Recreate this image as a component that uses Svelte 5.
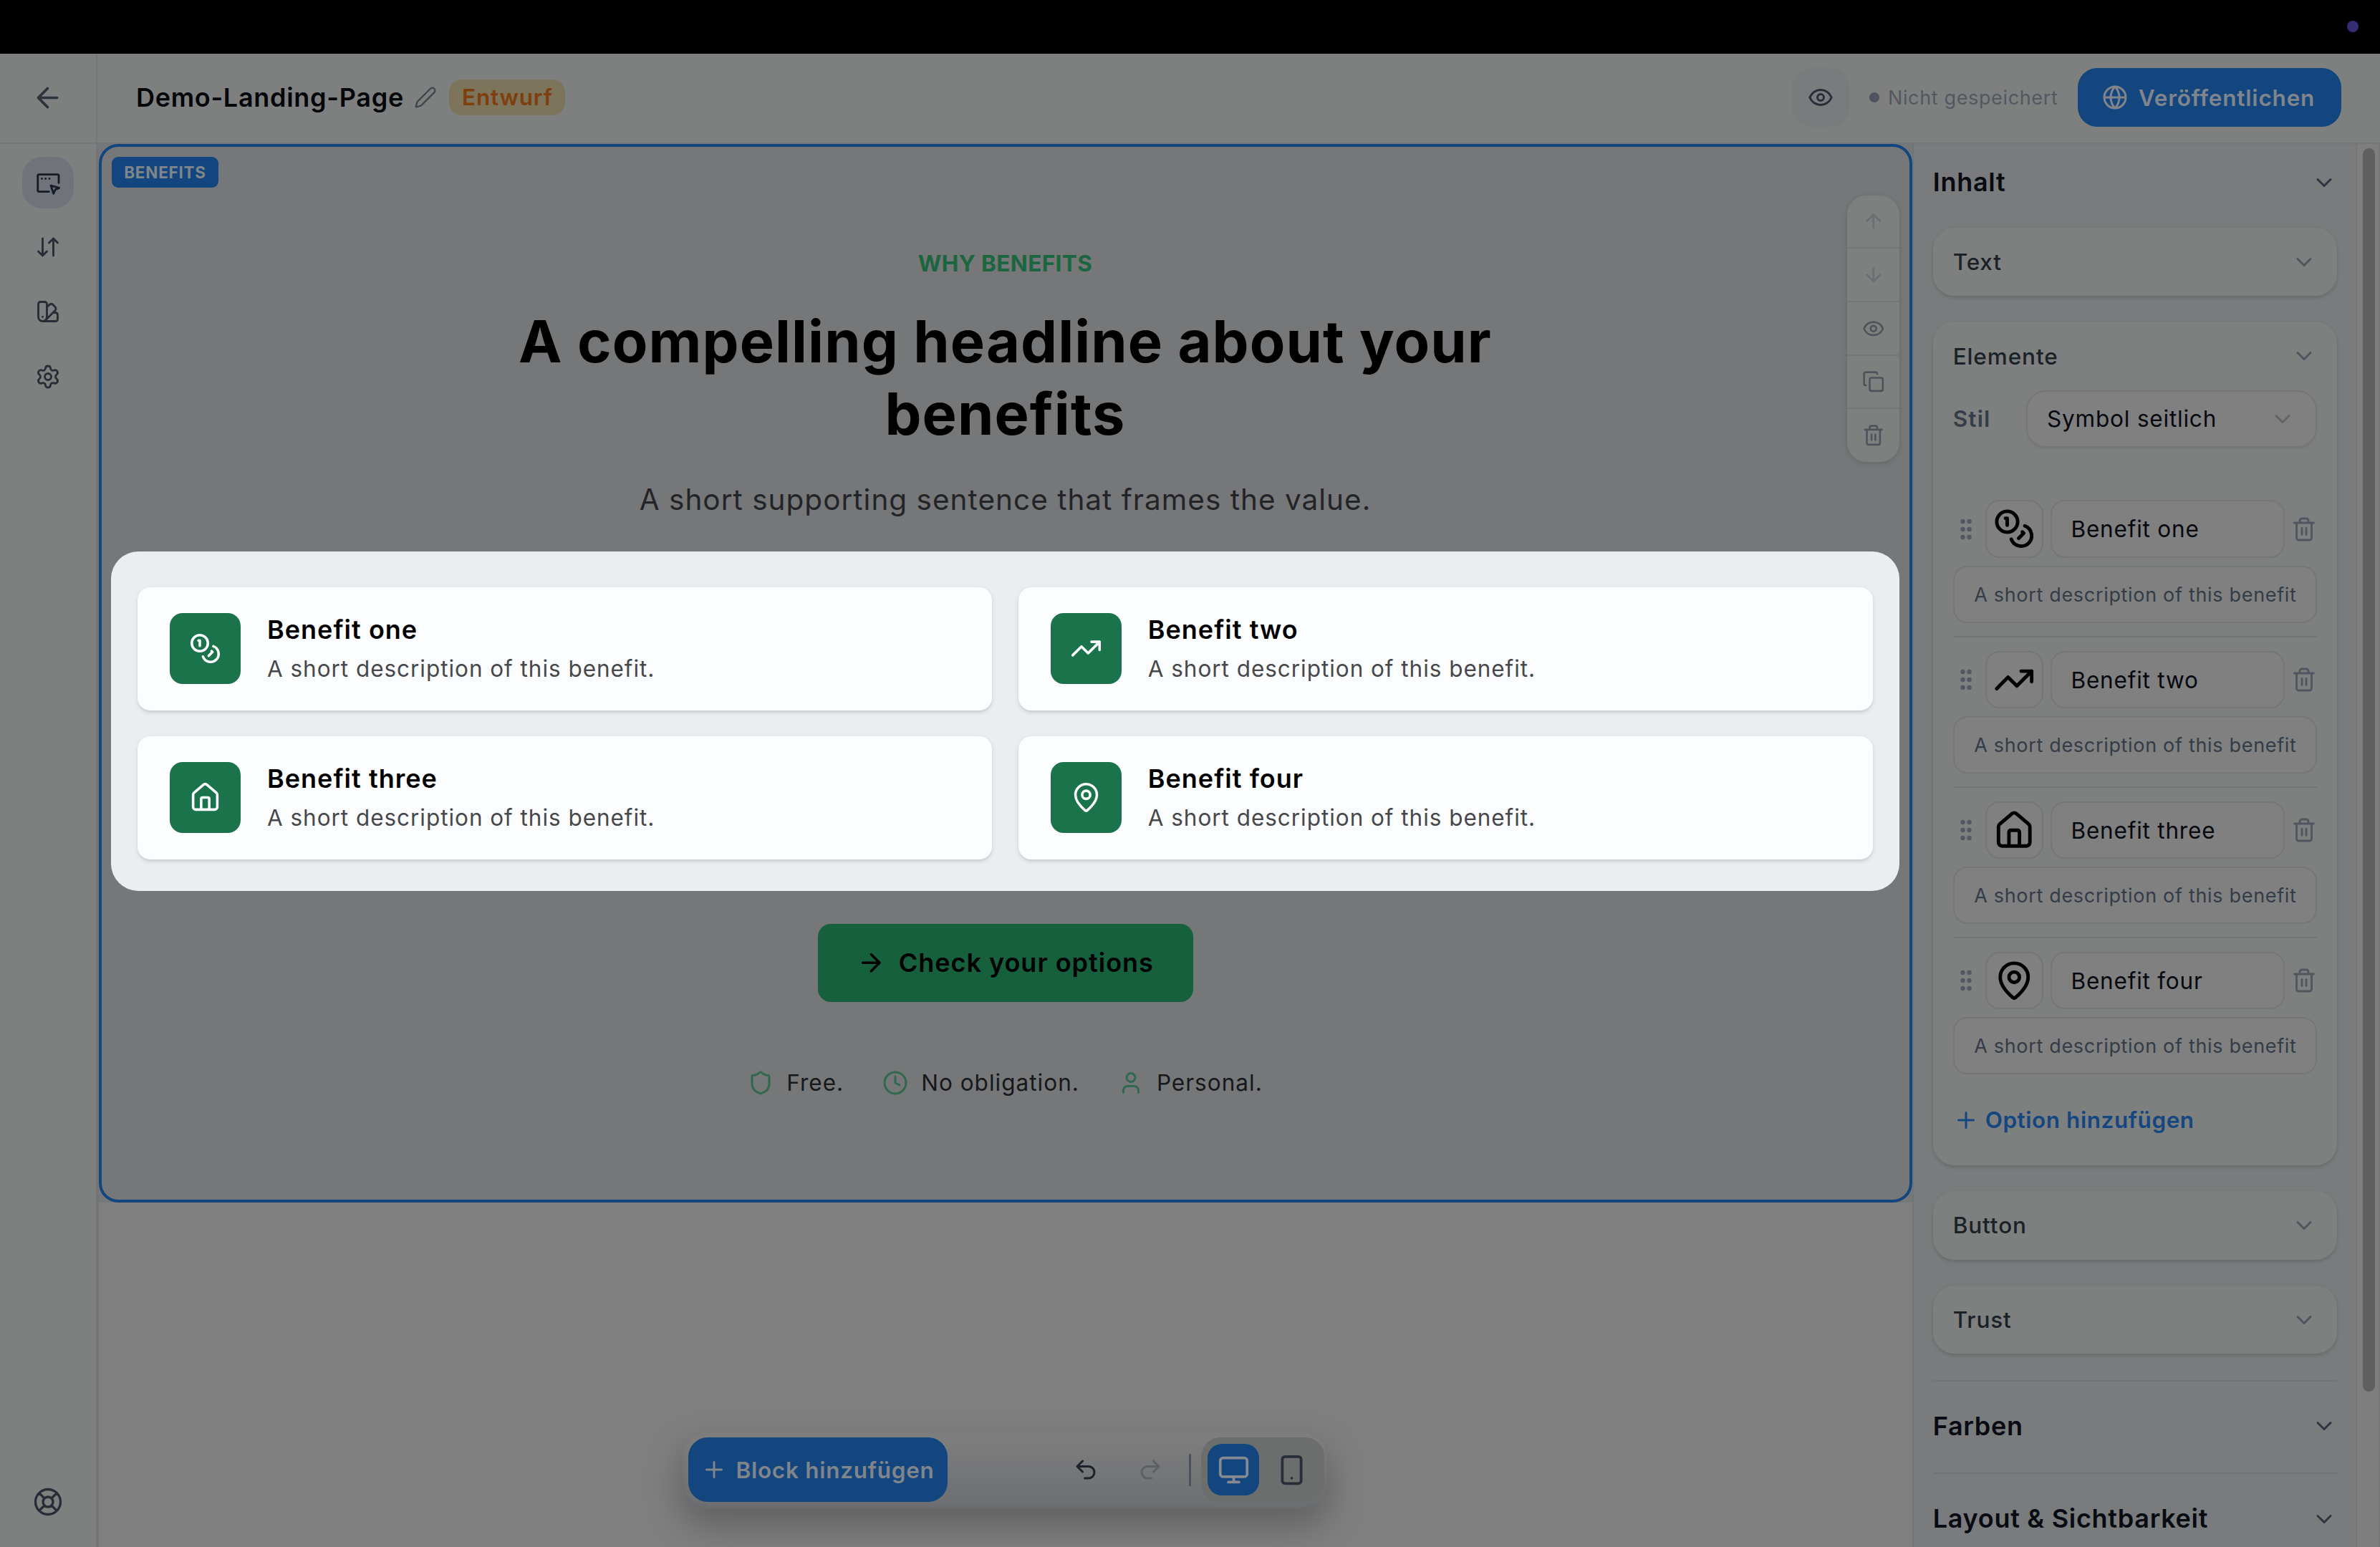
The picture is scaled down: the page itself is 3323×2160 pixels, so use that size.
<script>
  const benefits = [
    { name: 'Benefit one', icon: 'coins' },
    { name: 'Benefit two', icon: 'trend' },
    { name: 'Benefit three', icon: 'house' },
    { name: 'Benefit four', icon: 'pin' }
  ];
  const description = 'A short description of this benefit.';
  const trust = [
    { label: 'Free.', icon: 'shield' },
    { label: 'No obligation.', icon: 'clock' },
    { label: 'Personal.', icon: 'user' }
  ];
  const nav = ['builder', 'sort', 'swatch', 'settings'];
  const blockActions = ['up', 'down', 'eye', 'copy', 'trash'];

  // Stroke paths on a 24-unit grid.
  const icons = {
    back: 'M12 19l-7-7 7-7M19 12H5',
    forward: 'M5 12h14M12 5l7 7-7 7',
    up: 'M5 12l7-7 7 7M12 19V5',
    down: 'M12 5v14M19 12l-7 7-7-7',
    pencil: 'M21.174 6.812a1 1 0 0 0-3.986-3.987L3.842 16.174a2 2 0 0 0-.5.83l-1.321 4.352a.5.5 0 0 0 .623.622l4.353-1.32a2 2 0 0 0 .83-.497z',
    builder: 'M22 12.2V5.6a1.2 1.2 0 0 0-1.2-1.2H3.7a1.2 1.2 0 0 0-1.2 1.2v13.6a1.2 1.2 0 0 0 1.2 1.2h9.2M6.3 8.3h.01M9.8 8.3h.01M13.3 8.3h.01M14.7 14.7l7.7 2.2-3.5 1.5-1.8 3.8z',
    sort: 'M3 16l4 4 4-4M7 20V4M21 8l-4-4-4 4M17 4v16',
    swatch: 'M11 17a4 4 0 0 1-8 0V5a2 2 0 0 1 2-2h4a2 2 0 0 1 2 2ZM16.7 13H19a2 2 0 0 1 2 2v4a2 2 0 0 1-2 2H7M7 17h.01M11 8l2.3-2.3a2.4 2.4 0 0 1 3.404.004L18.6 7.6a2.4 2.4 0 0 1 .026 3.434L9.9 19.8',
    settings: 'M9.671 4.136a2.34 2.34 0 0 1 4.659 0 2.34 2.34 0 0 0 3.319 1.915 2.34 2.34 0 0 1 2.33 4.033 2.34 2.34 0 0 0 0 3.831 2.34 2.34 0 0 1-2.33 4.033 2.34 2.34 0 0 0-3.319 1.915 2.34 2.34 0 0 1-4.659 0 2.34 2.34 0 0 0-3.32-1.915 2.34 2.34 0 0 1-2.33-4.033 2.34 2.34 0 0 0 0-3.831A2.34 2.34 0 0 1 6.35 6.051a2.34 2.34 0 0 0 3.319-1.915M9 12a3 3 0 1 0 6 0 3 3 0 1 0-6 0',
    help: 'M2 12a10 10 0 1 0 20 0 10 10 0 1 0-20 0M4.93 4.93l4.24 4.24M14.83 9.17l4.24-4.24M14.83 14.83l4.24 4.24M9.17 14.83l-4.24 4.24M8 12a4 4 0 1 0 8 0 4 4 0 1 0-8 0',
    eye: 'M2.062 12.348a1 1 0 0 1 0-.696 10.75 10.75 0 0 1 19.876 0 1 1 0 0 1 0 .696 10.75 10.75 0 0 1-19.876 0M9 12a3 3 0 1 0 6 0 3 3 0 1 0-6 0',
    globe: 'M2 12a10 10 0 1 0 20 0 10 10 0 1 0-20 0M12 2a14.5 14.5 0 0 0 0 20 14.5 14.5 0 0 0 0-20M2 12h20',
    copy: 'M10 8h10a2 2 0 0 1 2 2v10a2 2 0 0 1-2 2H10a2 2 0 0 1-2-2V10a2 2 0 0 1 2-2ZM4 16c-1.1 0-2-.9-2-2V4c0-1.1.9-2 2-2h10c1.1 0 2 .9 2 2',
    trash: 'M3 6h18M19 6v14a2 2 0 0 1-2 2H7a2 2 0 0 1-2-2V6M8 6V4a2 2 0 0 1 2-2h4a2 2 0 0 1 2 2v2M10 11v6M14 11v6',
    chevron: 'M6 9l6 6 6-6',
    plus: 'M5 12h14M12 5v14',
    coins: 'M2 8a6 6 0 1 0 12 0 6 6 0 1 0-12 0M18.09 10.37A6 6 0 1 1 10.34 18M7 6h1v4M16.71 13.88l.7.71-2.82 2.82',
    trend: 'M22 7l-8.5 8.5-5-5L2 17M16 7h6v6',
    house: 'M15 21v-8a1 1 0 0 0-1-1h-4a1 1 0 0 0-1 1v8M3 10a2 2 0 0 1 .709-1.528l7-6a2 2 0 0 1 2.582 0l7 6A2 2 0 0 1 21 10v9a2 2 0 0 1-2 2H5a2 2 0 0 1-2-2z',
    pin: 'M20 10c0 4.993-5.539 10.193-7.399 11.799a1 1 0 0 1-1.202 0C9.539 20.193 4 14.993 4 10a8 8 0 0 1 16 0M9 10a3 3 0 1 0 6 0 3 3 0 1 0-6 0',
    shield: 'M20 13c0 5-3.5 7.5-7.66 8.95a1 1 0 0 1-.67-.01C7.5 20.5 4 18 4 13V6a1 1 0 0 1 1-1c2 0 4.5-1.2 6.24-2.72a1.17 1.17 0 0 1 1.52 0C14.51 3.81 17 5 19 5a1 1 0 0 1 1 1z',
    clock: 'M2 12a10 10 0 1 0 20 0 10 10 0 1 0-20 0M12 6v6l4 2',
    user: 'M19 21v-2a4 4 0 0 0-4-4H9a4 4 0 0 0-4 4v2M8 7a4 4 0 1 0 8 0 4 4 0 1 0-8 0',
    undo: 'M9 14L4 9l5-5M4 9h10.5a5.5 5.5 0 0 1 5.5 5.5 5.5 5.5 0 0 1-5.5 5.5H11',
    redo: 'M15 14l5-5-5-5M20 9H9.5A5.5 5.5 0 0 0 4 14.5 5.5 5.5 0 0 0 9.5 20H13',
    monitor: 'M4 3h16a2 2 0 0 1 2 2v10a2 2 0 0 1-2 2H4a2 2 0 0 1-2-2V5a2 2 0 0 1 2-2ZM8 21h8M12 17v4',
    phone: 'M7 2h10a2 2 0 0 1 2 2v16a2 2 0 0 1-2 2H7a2 2 0 0 1-2-2V4a2 2 0 0 1 2-2ZM12 18h.01'
  };
</script>

{#snippet icon(name, cls = '')}
  <svg class="icon {cls}" viewBox="0 0 24 24" aria-hidden="true"><path d={icons[name]} /></svg>
{/snippet}

<div class="page">
  <div class="strip"><span class="strip-dot"></span></div>

  <header class="header">
    <div class="back">{@render icon('back', 'i45')}</div>
    <div class="title">
      <h1>Demo-Landing-Page</h1>
      {@render icon('pencil', 'i32')}
      <span class="status">Entwurf</span>
    </div>
    <div class="header-actions">
      <button class="preview">{@render icon('eye')}</button>
      <span class="unsaved"><i></i>Nicht gespeichert</span>
      <button class="publish">{@render icon('globe')}Veröffentlichen</button>
    </div>
  </header>

  <div class="body">
    <nav class="sidebar">
      {#each nav as name, i}
        <button class="nav-item" class:active={i === 0}>{@render icon(name)}</button>
      {/each}
      <button class="nav-item help">{@render icon('help', 'i42')}</button>
    </nav>

    <main class="canvas">
      <section class="block">
        <span class="tag">BENEFITS</span>
        <p class="eyebrow">WHY BENEFITS</p>
        <h2 class="headline">A compelling headline about your<br />benefits</h2>
        <p class="lead">A short supporting sentence that frames the value.</p>

        <div class="spotlight">
          {#each benefits as b}
            <article class="card">
              <span class="tile">{@render icon(b.icon, 'i45')}</span>
              <div class="card-text">
                <h3>{b.name}</h3>
                <p>{description}</p>
              </div>
            </article>
          {/each}
        </div>

        <button class="cta">{@render icon('forward', 'i40')}Check your options</button>
        <ul class="trust">
          {#each trust as t}
            <li>{@render icon(t.icon)}{t.label}</li>
          {/each}
        </ul>

        <div class="actions">
          {#each blockActions as a, i}
            <button class:disabled={i < 2}>{@render icon(a, 'i31')}</button>
          {/each}
        </div>
      </section>

      <div class="dock">
        <button class="add-block">{@render icon('plus')}Block hinzufügen</button>
        <div class="dock-tools">
          <button class="tool">{@render icon('undo')}</button>
          <button class="tool off">{@render icon('redo')}</button>
          <span class="rule"></span>
          <div class="devices">
            <button class="on">{@render icon('monitor', 'i45')}</button>
            <button>{@render icon('phone', 'i45')}</button>
          </div>
        </div>
      </div>
    </main>

    <aside class="panel">
      <div class="group-head first"><h4>Inhalt</h4>{@render icon('chevron')}</div>
      <div class="box"><div class="box-head">Text{@render icon('chevron')}</div></div>
      <div class="box elements">
        <div class="box-head">Elemente{@render icon('chevron')}</div>
        <div class="style-row">
          <span>Stil</span>
          <div class="select">Symbol seitlich{@render icon('chevron')}</div>
        </div>
        <div class="items">
          {#each benefits as b}
            <div class="item">
              <div class="item-row">
                <svg class="grip" viewBox="0 0 18 30" aria-hidden="true">
                  {#each [4, 15, 26] as y}
                    <circle cx="4.5" cy={y} r="3.2" /><circle cx="13.5" cy={y} r="3.2" />
                  {/each}
                </svg>
                <div class="icon-pick">{@render icon(b.icon, 'i58')}</div>
                <div class="field">{b.name}</div>
                {@render icon('trash')}
              </div>
              <div class="field desc"><span>A short description of this benefit</span></div>
            </div>
          {/each}
        </div>
        <button class="add-option">{@render icon('plus')}Option hinzufügen</button>
      </div>
      <div class="box"><div class="box-head">Button{@render icon('chevron')}</div></div>
      <div class="box"><div class="box-head">Trust{@render icon('chevron')}</div></div>
      <div class="group-head"><h4>Farben</h4>{@render icon('chevron')}</div>
      <div class="group-head"><h4>Layout &amp; Sichtbarkeit</h4>{@render icon('chevron')}</div>
    </aside>

    <div class="scrollbar"><span></span></div>
  </div>
</div>

<style>
  :global(body) { background: #000; overflow: hidden; }
  .page, .page * { box-sizing: border-box; margin: 0; padding: 0; }
  .page {
    width: 3323px; height: 2160px; display: flex; flex-direction: column; overflow: hidden;
    font: 400 31.5px/45px Inter, "Liberation Sans", sans-serif; letter-spacing: 0.8px; color: #080c12;
  }
  button { font: inherit; letter-spacing: inherit; color: inherit; background: none; border: 0; display: flex; align-items: center; justify-content: center; }
  ul { list-style: none; }

  .icon { width: 36px; height: 36px; flex: none; fill: none; stroke: currentColor; stroke-width: 2; stroke-linecap: round; stroke-linejoin: round; }
  .i31 { width: 31.5px; height: 31.5px; }
  .i32 { width: 32px; height: 32px; }
  .i40 { width: 40.5px; height: 40.5px; }
  .i42 { width: 42px; height: 42px; }
  .i45 { width: 45px; height: 45px; stroke-width: 1.9; }
  .i58 { width: 58.5px; height: 58.5px; }

  .strip { height: 75px; flex: none; background: #000; display: flex; justify-content: flex-end; padding: 28.5px 30px 0 0; }
  .strip-dot { width: 16px; height: 16px; border-radius: 50%; background: #352d74; }

  .header { height: 126px; flex: none; display: flex; align-items: stretch; background: #7e807f; border-bottom: 2.25px solid #75777a; }
  .back { width: 135.5px; border-right: 2.25px solid #75777a; padding-bottom: 1.5px; display: flex; align-items: center; justify-content: center; color: #2c333d; }
  .title { display: flex; align-items: center; padding: 0 0 2px 54.5px; }
  .title h1 { font-size: 36px; font-weight: 600; line-height: 54px; letter-spacing: 0.7px; color: #040609; }
  .title .icon { margin-left: 14px; color: #41464d; stroke-width: 1.8; }
  .status { margin-left: 17.5px; width: 162px; height: 50px; border-radius: 18px; background: #7d745c; color: #7e3f0c; font-weight: 600; line-height: 49px; text-align: center; }
  .header-actions { margin-left: auto; display: flex; align-items: center; padding: 0 54px 1.5px 0; }
  .preview { width: 82px; height: 82px; border-radius: 27px; background: #7a7b7d; color: #272e38; }
  .unsaved { display: flex; align-items: center; width: 290.6px; margin-left: 27px; font-size: 27px; letter-spacing: 0.64px; color: #525761; }
  .unsaved i { width: 14px; height: 14px; border-radius: 50%; background: #4d535f; margin-right: 12px; }
  .publish { width: 368.5px; height: 82px; padding-right: 2px; border-radius: 27px; background: #13457f; color: #80858b; font-weight: 600; gap: 14.5px; }

  .body { flex: 1; min-height: 0; display: flex; }
  .sidebar { width: 138px; flex: none; background: #7e807f; border-right: 4.5px solid #737579; display: flex; flex-direction: column; align-items: center; gap: 18.2px; padding: 18px 0 27px; color: #262d37; }
  .nav-item { width: 72px; height: 72px; border-radius: 27px; }
  .nav-item .icon { stroke-width: 1.9; }
  .nav-item.active { background: #70747a; color: #151c26; }
  .help { margin-top: auto; }

  .canvas { position: relative; width: 2532px; flex: none; background: #808080; }
  .block { position: relative; height: 1478px; background: #767779; padding: 144px 18px 0 17px; display: flex; flex-direction: column; align-items: center; }
  .block::after { content: ''; position: absolute; inset: 0; border: 4.5px solid #13457f; border-radius: 27px; pointer-events: none; }
  .tag { position: absolute; left: 18px; top: 17.5px; width: 149px; height: 43px; border-radius: 9px; background: #13457f; color: #80858b; font-size: 22.5px; font-weight: 700; line-height: 43px; text-align: center; letter-spacing: 0.73px; }
  .eyebrow { font-weight: 700; color: #1b6640; letter-spacing: 0.4px; }
  .headline { margin-top: 36.6px; font-size: 81px; font-weight: 700; line-height: 101.25px; letter-spacing: 1.1px; text-align: center; color: #000; }
  .lead { margin-top: 38.5px; font-size: 40.5px; line-height: 60.75px; letter-spacing: 1.01px; color: #232427; }

  .spotlight { align-self: stretch; margin-top: 41.6px; height: 474px; border-radius: 38px; background: #ecedf0; padding: 50px 36.8px 44px 37.2px; display: grid; grid-template-columns: 1fr 1fr; gap: 36px 36.5px; }
  .card { display: flex; align-items: center; gap: 36.8px; padding: 0 45px; border-radius: 18px; background: #fcfdff; box-shadow: 0 2.25px 6px rgba(0, 0, 0, 0.1), 0 2.25px 4px -2px rgba(0, 0, 0, 0.1); }
  .tile { width: 99px; height: 99px; border-radius: 18px; background: #1b734c; color: #fcfdff; display: flex; align-items: center; justify-content: center; }
  .card-text { padding-bottom: 1px; }
  .card h3 { font-size: 36px; font-weight: 600; line-height: 54px; letter-spacing: 1.02px; color: #000; }
  .card p { margin-top: 2px; line-height: 51px; letter-spacing: 0.96px; color: #47484b; }

  .cta { margin-top: 46.3px; width: 524px; height: 108.7px; border-radius: 18px; background: #17603e; color: #000; font-size: 36px; font-weight: 600; letter-spacing: 0.98px; gap: 18px; }
  .trust { margin-top: 90.3px; display: flex; gap: 54px; letter-spacing: 1.02px; color: #17181a; }
  .trust li { display: flex; align-items: center; gap: 18px; }
  .trust .icon { color: #30694e; }

  .actions { position: absolute; left: 2441px; top: 71.7px; width: 73px; height: 372px; border-radius: 27px; background: #7e807f; box-shadow: 0 2px 7px rgba(0, 0, 0, 0.14); overflow: hidden; color: #4e535b; }
  .actions button { width: 100%; height: 74.7px; border-bottom: 2.25px solid #74767a; }
  .actions button:last-child { border-bottom: 0; height: 73px; }
  .actions .disabled { color: #6a6d72; }

  .dock { position: absolute; left: 813px; top: 1796.7px; width: 904px; height: 109px; padding: 0 6.5px 0 9.5px; border-radius: 33px; display: flex; align-items: center; justify-content: space-between; background: linear-gradient(#7f7f7f, #6c6e71); box-shadow: 0 22px 54px rgba(0, 0, 0, 0.27), inset 0 0 9px rgba(0, 0, 0, 0.08); }
  .add-block { width: 362px; height: 90px; border-radius: 27px; background: #13457f; color: #80858b; font-weight: 600; letter-spacing: 0.72px; gap: 13px; }
  .dock-tools { display: flex; align-items: center; }
  .tool { width: 90px; height: 90px; color: #1b222c; }
  .tool.off { color: #5d6064; }
  .rule { width: 2.25px; height: 45px; margin: 0 14.5px 0 9px; background: #4c525b; }
  .devices { width: 171.5px; height: 91px; border-radius: 27px; background: #6c6d6d; display: flex; align-items: center; gap: 9px; padding: 0 9px; }
  .devices button { width: 72.5px; height: 72.5px; border-radius: 20px; color: #272e38; }
  .devices .on { background: #13457f; color: #858a90; }
  .devices .icon { stroke-width: 2; }

  .panel { width: 619px; flex: none; overflow: hidden; background: #797b7d; border-left: 2.25px solid #727578; padding: 0 26px 0 26.75px; }
  .group-head { height: 129.3px; border-top: 2.25px solid #717377; padding-bottom: 1.5px; display: flex; align-items: center; justify-content: space-between; color: #2e3540; }
  .group-head.first { height: 107px; padding: 0; border: 0; margin-bottom: 9.8px; }
  h4 { font-size: 36px; font-weight: 600; letter-spacing: 0.7px; color: #080c12; }
  .box { margin-bottom: 36.2px; padding: 0 27.9px; border-radius: 30px; background: #7e807f; box-shadow: 0 2.25px 5px rgba(0, 0, 0, 0.13); }
  .box-head { height: 95.5px; display: flex; align-items: center; justify-content: space-between; font-weight: 500; letter-spacing: 0.9px; color: #1a2127; }
  .box-head .icon { color: #4f555f; }
  .elements { height: 1177.5px; }
  .style-row { display: flex; align-items: center; justify-content: space-between; font-weight: 600; letter-spacing: 1.2px; color: #363d49; }
  .select { width: 406px; height: 80px; padding: 0 28px 0 27px; border: 2.25px solid #737579; border-radius: 27px; background: #808080; box-shadow: 0 2px 4px rgba(0, 0, 0, 0.06); display: flex; align-items: center; justify-content: space-between; font-weight: 400; letter-spacing: 0.8px; color: #06090f; }
  .select .icon { color: #606469; }
  .items { margin-top: 73.5px; }
  .item { display: flex; flex-direction: column; gap: 10.7px; }
  .item + .item { margin-top: 18.5px; padding-top: 18.6px; border-top: 2.25px solid #707378; }
  .item-row { display: flex; align-items: center; color: #50555f; }
  .item-row > :global(.icon) { stroke-width: 1.9; }
  .grip { width: 18px; height: 30px; margin: 0 18.5px 0 9px; fill: #525761; flex: none; }
  .icon-pick { width: 80.4px; height: 80.4px; flex: none; border: 2.25px solid #74767a; border-radius: 20px; background: #808080; display: flex; align-items: center; justify-content: center; color: #000; }
  .field { flex: 1; height: 80.4px; margin: 0 9.5px 0 10px; padding: 0 28px 0 27px; border: 2.25px solid #74767a; border-radius: 20px; background: #808080; line-height: 77.5px; color: #06090f; overflow: hidden; white-space: nowrap; }
  .desc { flex: none; height: 80px; margin: 0; padding: 0 26px 0 27.5px; font-size: 27px; letter-spacing: 0.68px; color: #343c47; }
  .add-option { height: 54px; margin-top: 36.5px; gap: 9px; font-weight: 600; letter-spacing: 0.55px; color: #14467f; }

  .scrollbar { flex: 1; background: #7e7e7e; border-left: 2.25px solid #777; border-right: 2px solid #777; padding: 6px 0 0 7.5px; }
  .scrollbar span { display: block; width: 17px; height: 1735.5px; border-radius: 9px; background: #5f5f5f; }
</style>
